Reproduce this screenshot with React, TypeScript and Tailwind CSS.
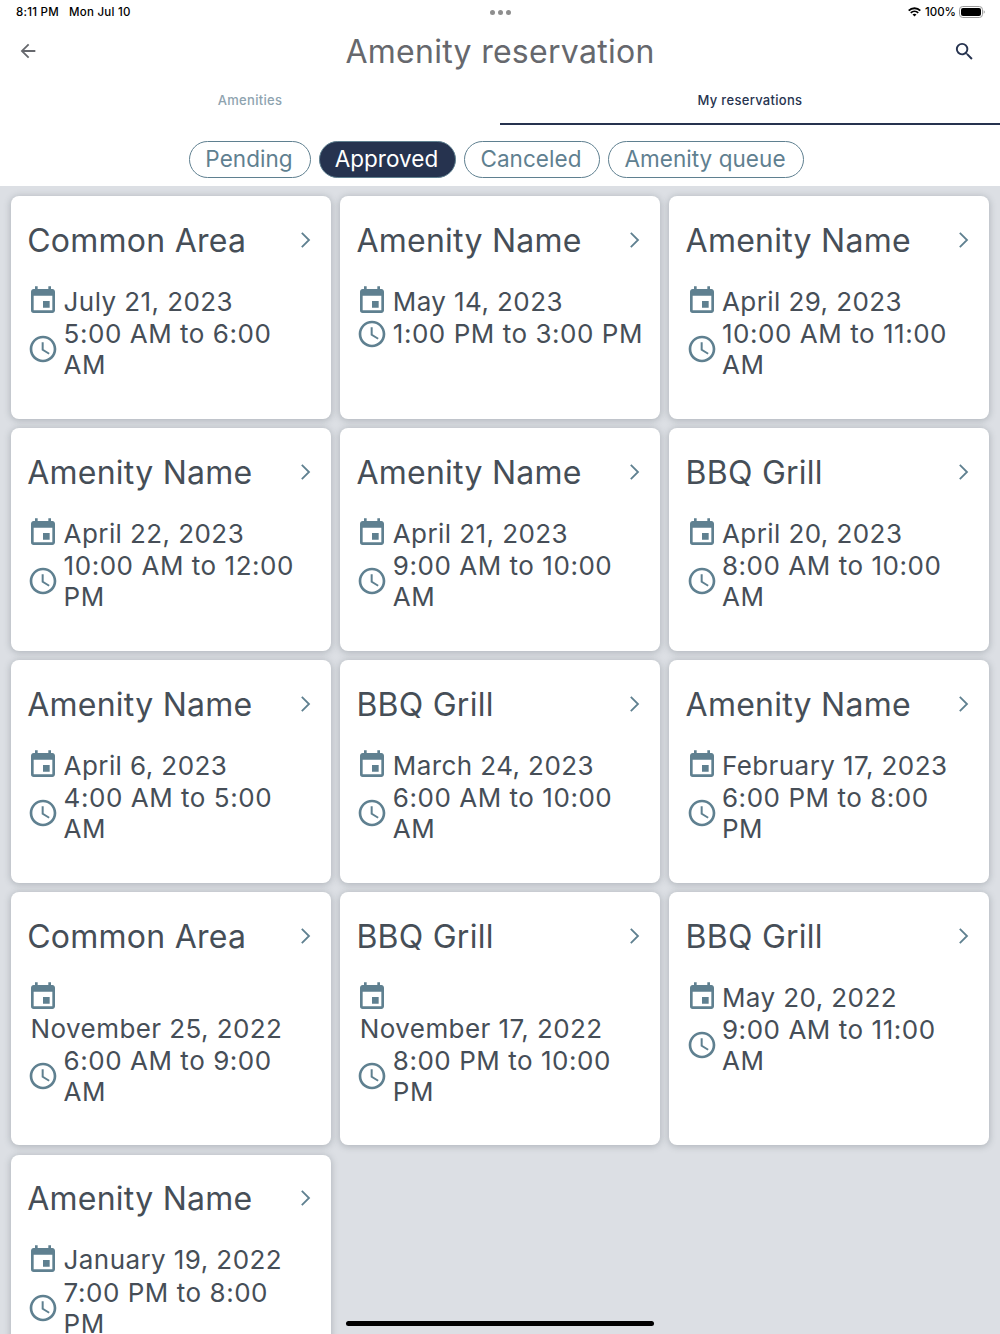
import { MdAccessTime, MdArrowBack, MdEvent, MdSearch } from "react-icons/md";

type Reservation = { name: string; date: string; time: string[]; stacked?: boolean };

const reservations: Reservation[] = [
  { name: "Common Area", date: "July 21, 2023", time: ["5:00 AM to 6:00", "AM"] },
  { name: "Amenity Name", date: "May 14, 2023", time: ["1:00 PM to 3:00 PM"] },
  { name: "Amenity Name", date: "April 29, 2023", time: ["10:00 AM to 11:00", "AM"] },
  { name: "Amenity Name", date: "April 22, 2023", time: ["10:00 AM to 12:00", "PM"] },
  { name: "Amenity Name", date: "April 21, 2023", time: ["9:00 AM to 10:00", "AM"] },
  { name: "BBQ Grill", date: "April 20, 2023", time: ["8:00 AM to 10:00", "AM"] },
  { name: "Amenity Name", date: "April 6, 2023", time: ["4:00 AM to 5:00", "AM"] },
  { name: "BBQ Grill", date: "March 24, 2023", time: ["6:00 AM to 10:00", "AM"] },
  { name: "Amenity Name", date: "February 17, 2023", time: ["6:00 PM to 8:00", "PM"] },
  { name: "Common Area", date: "November 25, 2022", time: ["6:00 AM to 9:00", "AM"], stacked: true },
  { name: "BBQ Grill", date: "November 17, 2022", time: ["8:00 PM to 10:00", "PM"], stacked: true },
  { name: "BBQ Grill", date: "May 20, 2022", time: ["9:00 AM to 11:00", "AM"] },
  { name: "Amenity Name", date: "January 19, 2022", time: ["7:00 PM to 8:00", "PM"] },
];

function StatusBar() {
  return (
    <div className="flex h-6 shrink-0 items-center justify-between pl-4 pr-[15px] text-[11.5px] font-medium text-black">
      <div className="flex w-[200px] gap-[10px] whitespace-nowrap pt-px tracking-[0.25px]">
        <span>8:11 PM</span>
        <span>Mon Jul 10</span>
      </div>
      <div className="flex gap-[3px]">
        <i className="size-[5px] rounded-full bg-[#8e8e8e]" />
        <i className="size-[5px] rounded-full bg-[#8e8e8e]" />
        <i className="size-[5px] rounded-full bg-[#8e8e8e]" />
      </div>
      <div className="flex w-[200px] items-center justify-end">
        <svg className="mr-1 h-[10px] w-[13px]" viewBox="0 0 13 10" fill="none" stroke="#000" strokeWidth="1.9">
          <path d="M0.7 3.6a8.3 8.3 0 0 1 11.6 0" />
          <path d="M2.8 5.9a5.3 5.3 0 0 1 7.4 0" />
          <path d="M6.5 9.6 4.5 7.6a2.9 2.9 0 0 1 4 0Z" fill="#000" stroke="none" />
        </svg>
        <span className="pt-px">100%</span>
        <svg className="ml-[3px] h-3 w-[26px]" viewBox="0 0 26 12">
          <rect x="0.5" y="0.5" width="23" height="11" rx="3.2" fill="none" stroke="#9b9b9b" />
          <rect x="2" y="2" width="20" height="8" rx="2" fill="#000" />
          <path d="M24.7 4.2q1.1.6 1.1 1.8t-1.1 1.8Z" fill="#9b9b9b" />
        </svg>
      </div>
    </div>
  );
}

function Chip({ label, className }: { label: string; className: string }) {
  return (
    <div
      className={`flex h-[37px] items-center justify-center whitespace-nowrap rounded-full border border-[#5f8090] pb-px pr-px text-[22.5px] tracking-[0.05px] ${className}`}
    >
      {label}
    </div>
  );
}

function Card({ name, date, time, stacked }: Reservation) {
  return (
    <article className="rounded-[8px] bg-white pb-[38.4px] pl-[16.5px] pr-[18px] pt-[26.4px] text-[#464e57] shadow-[0_1px_6px_1px_rgba(70,80,90,0.27)]">
      <div className="flex h-9 items-center justify-between">
        <h2 className="whitespace-nowrap text-[32px] tracking-[0.25px]">{name}</h2>
        <svg className="mb-[2px] h-[18px] w-[14px]" viewBox="0 0 14 18" fill="none" stroke="#5f8090" strokeWidth="1.8">
          <path d="M2.8 1.8 10 9l-7.2 7.2" />
        </svg>
      </div>
      <div className="mt-[26px] text-[26px] leading-[31.2px]">
        <div className={stacked ? "flex flex-col pt-[0.3px]" : "flex items-center pb-[0.4px]"}>
          <MdEvent className="size-8 shrink-0 text-[#5f8090]" />
          <span
            className={`whitespace-nowrap tracking-[0.42px] ${stacked ? "ml-[3.4px]" : "ml-[4.4px] pt-px"}`}
          >
            {date}
          </span>
        </div>
        <div className="flex items-center pt-[0.6px]">
          <MdAccessTime className="size-8 shrink-0 text-[#5f8090]" />
          <div className="ml-[4.4px] tracking-[0.54px]">
            {time.map((line) => (
              <div key={line} className="whitespace-nowrap">
                {line}
              </div>
            ))}
          </div>
        </div>
      </div>
    </article>
  );
}

export default function App() {
  return (
    <div className="relative flex h-[1334px] w-[1000px] flex-col overflow-hidden bg-white font-['Inter',sans-serif]">
      <StatusBar />
      <header className="grid h-[54px] shrink-0 grid-cols-[1fr_auto_1fr] items-center px-[17px]">
        <MdArrowBack className="size-[22px] text-[#66686d]" />
        <h1 className="pt-px text-[32px] tracking-[0.28px] text-[#66686d]">Amenity reservation</h1>
        <MdSearch className="mr-[7px] size-[23px] justify-self-end text-[#26334f]" />
      </header>
      <nav className="grid h-[47px] shrink-0 grid-cols-2 text-[13px] font-medium tracking-[0.3px]">
        <div className="flex items-center justify-center border-b-2 border-transparent text-[#8ea3af]">Amenities</div>
        <div className="flex items-center justify-center border-b-2 border-[#26334f] text-[#26334f]">
          My reservations
        </div>
      </nav>
      <div className="flex h-[61px] shrink-0 justify-center gap-2 pr-2 pt-4">
        <Chip label="Pending" className="w-[122px] text-[#5f8090]" />
        <Chip label="Approved" className="w-[137px] bg-[#26334f] text-white" />
        <Chip label="Canceled" className="w-[136px] text-[#5f8090]" />
        <Chip label="Amenity queue" className="w-[196px] text-[#5f8090]" />
      </div>
      <main className="grid flex-1 grid-cols-[320px_320px_320px] content-start gap-x-[9.2px] gap-y-[9.6px] bg-[#dcdfe4] px-[10.7px] pt-[10.3px]">
        {reservations.map((r, i) => (
          <Card key={i} {...r} />
        ))}
      </main>
      <div className="absolute bottom-[8px] left-[346px] h-[5px] w-[308px] rounded-full bg-black" />
    </div>
  );
}
